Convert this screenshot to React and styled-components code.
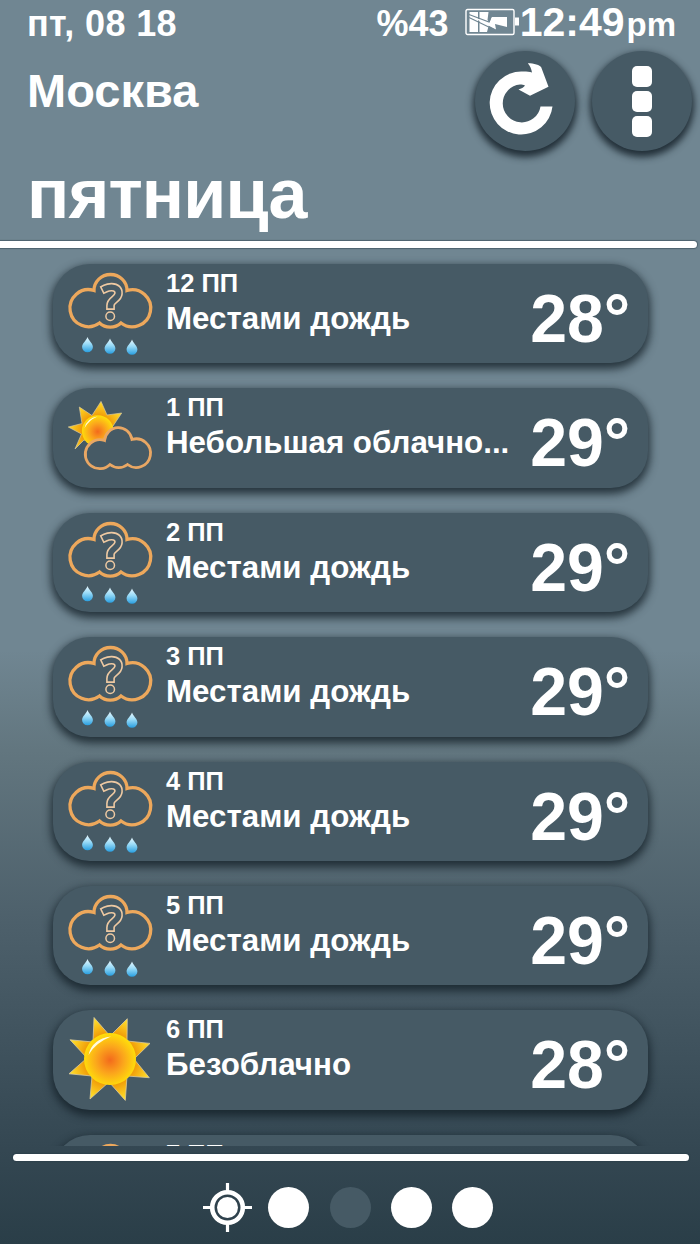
import React from 'react';
import styled, { createGlobalStyle } from 'styled-components';

const hours = [
    { time: '12 ПП', text: 'Местами дождь', temp: 28, icon: 'rain' },
    { time: '1 ПП', text: 'Небольшая облачно...', temp: 29, icon: 'partly' },
    { time: '2 ПП', text: 'Местами дождь', temp: 29, icon: 'rain' },
    { time: '3 ПП', text: 'Местами дождь', temp: 29, icon: 'rain' },
    { time: '4 ПП', text: 'Местами дождь', temp: 29, icon: 'rain' },
    { time: '5 ПП', text: 'Местами дождь', temp: 29, icon: 'rain' },
    { time: '6 ПП', text: 'Безоблачно', temp: 28, icon: 'sun' },
    { time: '7 ПП', icon: 'rain' },
];

const Gradients = () => (
    <defs>
        <radialGradient id="sunBody" cx=".5" cy=".52" r=".52">
            <stop offset="0" stopColor="#f36a1c" />
            <stop offset=".5" stopColor="#fba51c" />
            <stop offset="1" stopColor="#ffe00a" />
        </radialGradient>
        <radialGradient id="sunRays" gradientUnits="userSpaceOnUse" cx="50" cy="49" r="42">
            <stop offset=".6" stopColor="#f09a08" />
            <stop offset="1" stopColor="#ffdf2a" />
        </radialGradient>
        <radialGradient id="smallRays" gradientUnits="userSpaceOnUse" cx="37" cy="43" r="30">
            <stop offset=".5" stopColor="#f09a08" />
            <stop offset="1" stopColor="#ffdf2a" />
        </radialGradient>
        <linearGradient id="drop" x1="0" y1="0" x2="0" y2="1">
            <stop offset="0" stopColor="#e9f8ff" />
            <stop offset=".45" stopColor="#9bdcf8" />
            <stop offset="1" stopColor="#2a9fe0" />
        </linearGradient>
    </defs>
);

const Drop = ({ x, y }) => (
    <path
        transform={`translate(${x} ${y})`}
        d="M0 0C1.5 4 5.4 6.5 5.4 10A5.4 5.2 0 0 1-5.4 10C-5.4 6.5-1.5 4 0 0Z"
        fill="url(#drop)"
    />
);

const hook = 'M45.500 24.500Q48 23.300 51.500 23.200C56.500 23.100 58.800 26 58.500 29.500C58 35.500 50.500 35.500 50.500 41.500';

const Rain = () => (
    <>
        <path
            d="M34 26.500A16.500 16 0 0 1 67 26.500A18.500 18.500 0 1 1 61 59A16 16 0 0 1 39.500 59A18.500 18.500 0 1 1 34 26.500Z"
            fill="none" stroke="#eda85c" strokeWidth="3.300"
        />
        <g fill="none" strokeLinecap="square">
            <path d={hook} stroke="#eec9a2" strokeWidth="8.800" />
            <path d={hook} stroke="#465a65" strokeWidth="5.600" />
        </g>
        <circle cx="50.200" cy="52.300" r="4.300" fill="#465a65" stroke="#eec9a2" strokeWidth="1.500" />
        <Drop x={27.5} y={73} />
        <Drop x={50} y={74.5} />
        <Drop x={72} y={75.5} />
    </>
);

const Partly = () => (
    <>
        <path
            d="M15 61L21.500 46L8.300 39L22 35.500L19.300 19L32 27.500L41 13.400L47 27L61.700 25L53 38L38 57L24 52Z"
            fill="url(#smallRays)" stroke="#d9c9a0" strokeWidth=".7"
        />
        <circle cx="37.700" cy="43" r="15.800" fill="url(#sunBody)" />
        <path d="M24.500 40Q27 30 37.500 28.500Q29 32 24.500 40Z" fill="#fffbe0" />
        <path
            d="M44.500 52.500A13.900 14.500 0 0 1 72 51.500A14.300 14.300 0 1 1 67.500 76.500A14 14 0 0 1 50 76.500A14.500 14.500 0 1 1 44.500 52.500Z"
            fill="#465a65" stroke="#e9a764" strokeWidth="2.800"
        />
    </>
);

const Sun = () => (
    <>
        <path
            d="M34 7.500L50 26L67.300 8.700L67 31L90 33.400L74 49L89.300 67.700L67 66L65.300 90.400L49 72L30 89L32 66L9 63.800L27 48L10 29.800L33 32Z"
            fill="url(#sunRays)" stroke="#d9c9a0" strokeWidth=".8"
        />
        <circle cx="50" cy="49" r="26" fill="url(#sunBody)" />
        <path d="M28.500 45Q32 29 51 26.500Q35 33 28.500 45Z" fill="#fffbe0" />
    </>
);

const icons = { rain: Rain, partly: Partly, sun: Sun };

const Hour = ({ time, text, temp, icon }) => {
    const Weather = icons[icon];

    return (
        <Card>
            <Icon viewBox="0 0 100 100">
                <Gradients />
                <Weather />
            </Icon>
            <Info>
                <Time>{time}</Time>
                {text && <Summary>{text}</Summary>}
            </Info>
            {temp && <Temp>{temp}°</Temp>}
        </Card>
    )
}

const App = () => (
    <Screen>
        <Global />
        <StatusBar>
            <Today>пт, 08 18</Today>
            <Percent>%43</Percent>
            <Battery viewBox="0 0 54 28">
                <rect x="1" y="1.500" width="48" height="25" rx="1.500" fill="none" stroke="#fff" strokeWidth="1.400" />
                <path d="M50 9.500h4v8h-4z" fill="#fff" />
                <path d="M4.500 4h8.500v20H4.500zM14.500 4h9l-1 8 2 2.500-2.500 9.500h-7.500z" fill="#fff" />
                <path d="M5 8L31 21.500L30 16L42 19V9H26.500L24.500 14.500Z" fill="#fff" />
                <path d="M4 6.500L24 14L26.500 8M4 9.500L31 22.500" fill="none" stroke="#708692" strokeWidth="1.100" />
            </Battery>
            <Clock>12:49</Clock>
            <Period>pm</Period>
        </StatusBar>
        <Header>
            <Titles>
                <City>Москва</City>
                <Day>пятница</Day>
            </Titles>
            <Actions>
                <RoundButton aria-label="refresh">
                    <svg width="100" height="100" viewBox="0 0 100 100">
                        <path
                            d="M52.800 12.300C59 12.300 65 14 66.200 16.300L73.500 35.700L55 44.700L43.500 38.500C46 37.500 49 36.500 50 34.500C48.500 33.800 47 33.500 45 33.500A19 19 0 1 0 65.500 55.500H77.500A31.500 31.500 0 1 1 46.500 20.500C50 20.300 54 20.500 57 21.500C56.500 18 55 15 52.800 12.300Z"
                            fill="#fff"
                        />
                    </svg>
                </RoundButton>
                <RoundButton aria-label="menu">
                    <Square />
                    <Square />
                    <Square />
                </RoundButton>
            </Actions>
        </Header>
        <Divider />
        <List>
            {hours.map(hour => <Hour key={hour.time} {...hour} />)}
        </List>
        <Divider $bottom />
        <Pager>
            <Locate viewBox="0 0 49 49">
                <path d="M24.500 0v49M0 24.500h49" stroke="#fff" strokeWidth="3.200" />
                <circle cx="24.500" cy="24.500" r="15.300" fill="#2f424d" stroke="#fff" strokeWidth="4.600" />
                <circle cx="24.500" cy="24.500" r="10.500" fill="#fff" />
            </Locate>
            <Dot />
            <Dot $active />
            <Dot />
            <Dot />
        </Pager>
    </Screen>
)

export default App;

const Global = createGlobalStyle`
    body {
        margin: 0;
    }
    * {
        box-sizing: border-box;
    }
`

const Screen = styled.div`
    display: flex;
    flex-direction: column;
    width: 700px;
    height: 1244px;
    overflow: hidden;
    color: #fff;
    font-family: "Liberation Sans", Arial, sans-serif;
    font-weight: bold;
    white-space: nowrap;
    background: linear-gradient(#708692 0, #708692 650px, #62767f 750px, #4c5f6a 930px, #344752 1150px, #2a3e48 1244px);
`

const StatusBar = styled.div`
    display: flex;
    flex: none;
    align-items: baseline;
    height: 46px;
    padding: 0 24px 0 27px;
    line-height: 44px;
`

const Today = styled.span`
    flex: 1;
    font-size: 36px;
    letter-spacing: .35px;
`

const Percent = styled.span`
    font-size: 36px;
`

const Battery = styled.svg`
    width: 54px;
    height: 28px;
    margin: 0 1px 0 16px;
`

const Clock = styled.span`
    font-size: 41px;
`

const Period = styled.span`
    margin-left: 2px;
    font-size: 33px;
`

const Header = styled.div`
    display: flex;
    flex: none;
    justify-content: space-between;
    height: 192px;
    padding: 5px 8px 0 27px;
`

const Titles = styled.div`
    display: flex;
    flex-direction: column;
`

const City = styled.div`
    margin-top: 13px;
    font-size: 47px;
    line-height: 54px;
`

const Day = styled.div`
    margin-top: 36px;
    font-size: 70px;
    line-height: 80px;
    letter-spacing: -.85px;
`

const Actions = styled.div`
    display: flex;
    gap: 17px;
`

const RoundButton = styled.button`
    display: flex;
    flex-direction: column;
    align-items: center;
    justify-content: center;
    gap: 4px;
    width: 100px;
    height: 100px;
    padding: 0;
    border: none;
    border-radius: 50%;
    background: #465a65;
    box-shadow: 0 4px 7px 2px rgba(20, 32, 40, .85);
`

const Square = styled.span`
    width: 20px;
    height: 21px;
    border-radius: 5px;
    background: #fff;
`

const Divider = styled.div`
    flex: none;
    height: 7px;
    margin: ${({ $bottom }) => ($bottom ? '8px 11px 0 13px' : '3px 3px 0 0')};
    border-radius: ${({ $bottom }) => ($bottom ? '4px' : '0 4px 4px 0')};
    background: #fff;
    box-shadow: 0 0 1px 1px rgba(40, 60, 72, .5);
`

const List = styled.div`
    display: flex;
    flex: none;
    flex-direction: column;
    gap: 25px;
    height: 898px;
    padding: 16px 52px 0 53px;
    overflow: hidden;
`

const Card = styled.div`
    display: flex;
    flex: none;
    height: 99.4px;
    padding: 0 18px 0 7px;
    border-radius: 37px;
    background: #465a65;
    box-shadow: 0 4px 8px 2px rgba(20, 32, 40, .8);
`

const Icon = styled.svg`
    flex: none;
    width: 100px;
    height: 100px;
`

const Info = styled.div`
    flex: 1;
    padding: 4px 0 0 6px;
`

const Time = styled.div`
    font-size: 25.5px;
    line-height: 31px;
`

const Summary = styled.div`
    margin-top: 1px;
    font-size: 31.3px;
    line-height: 38px;
`

const Temp = styled.div`
    font-size: 69px;
    line-height: 110px;
    transform: scaleX(.96);
    transform-origin: right;
`

const Pager = styled.div`
    display: flex;
    align-items: center;
    gap: 20.3px;
    padding: 22px 0 0 203px;
`

const Locate = styled.svg`
    width: 49px;
    height: 49px;
    margin-right: -4px;
`

const Dot = styled.span`
    width: 41px;
    height: 41px;
    border-radius: 50%;
    background: ${({ $active }) => ($active ? '#465a65' : '#fff')};
`
